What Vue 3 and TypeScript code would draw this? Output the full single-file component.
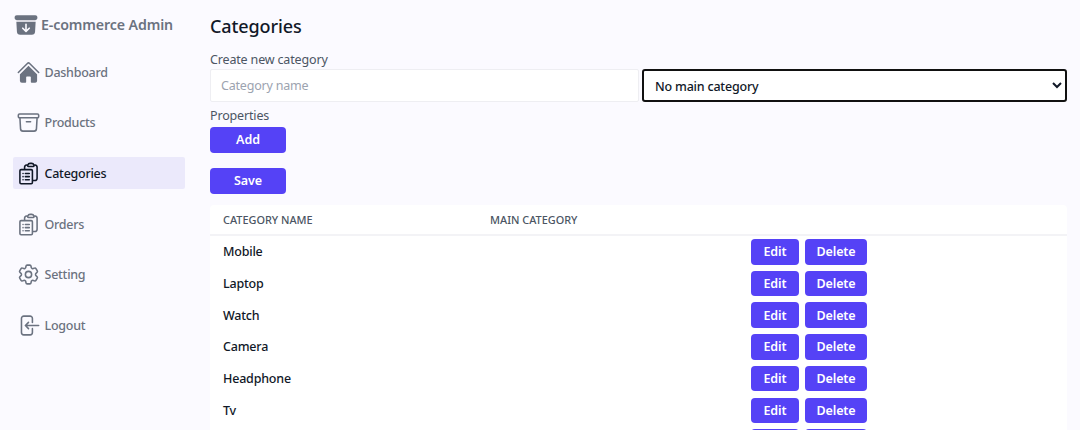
<script setup lang="ts">
type NavItem = { label: string; paths: string[]; solid?: boolean; active?: boolean }

const clipboard =
  'M9 12h3.75M9 15h3.75M9 18h3.75m3 .75H18a2.25 2.25 0 002.25-2.25V6.108c0-1.135-.845-2.098-1.976-2.192a48.424 48.424 0 00-1.123-.08m-5.801 0c-.065.21-.1.433-.1.664 0 .414.336.75.75.75h4.5a.75.75 0 00.75-.75 2.25 2.25 0 00-.1-.664m-5.8 0A2.251 2.251 0 0113.5 2.25H15c1.012 0 1.867.668 2.15 1.586m-5.8 0c-.376.023-.75.05-1.124.08C9.095 4.01 8.25 4.973 8.25 6.108V8.25m0 0H4.875c-.621 0-1.125.504-1.125 1.125v11.25c0 .621.504 1.125 1.125 1.125h9.75c.621 0 1.125-.504 1.125-1.125V9.375c0-.621-.504-1.125-1.125-1.125H8.25zM6.75 12h.008v.008H6.75V12zm0 3h.008v.008H6.75V15zm0 3h.008v.008H6.75V18z'

const nav: NavItem[] = [
  {
    label: 'Dashboard',
    solid: true,
    paths: [
      'M11.47 3.84a.75.75 0 011.06 0l8.69 8.69a.75.75 0 101.06-1.06l-8.689-8.69a2.25 2.25 0 00-3.182 0l-8.69 8.69a.75.75 0 001.061 1.06l8.69-8.69z',
      'M12 5.432l8.159 8.159c.03.03.06.058.091.086v6.198c0 1.035-.84 1.875-1.875 1.875H15a.75.75 0 01-.75-.75v-4.5a.75.75 0 00-.75-.75h-3a.75.75 0 00-.75.75V21a.75.75 0 01-.75.75H5.625a1.875 1.875 0 01-1.875-1.875v-6.198a2.29 2.29 0 00.091-.086L12 5.43z'
    ]
  },
  {
    label: 'Products',
    paths: [
      'M20.25 7.5l-.625 10.632a2.25 2.25 0 01-2.247 2.118H6.622a2.25 2.25 0 01-2.247-2.118L3.75 7.5M10 11.25h4M3.375 7.5h17.25c.621 0 1.125-.504 1.125-1.125v-1.5c0-.621-.504-1.125-1.125-1.125H3.375c-.621 0-1.125.504-1.125 1.125v1.5c0 .621.504 1.125 1.125 1.125z'
    ]
  },
  { label: 'Categories', active: true, paths: [clipboard] },
  { label: 'Orders', paths: [clipboard] },
  {
    label: 'Setting',
    paths: [
      'M9.594 3.94c.09-.542.56-.94 1.11-.94h2.593c.55 0 1.02.398 1.11.94l.213 1.281c.063.374.313.686.645.87.074.04.147.083.22.127.324.196.72.257 1.075.124l1.217-.456a1.125 1.125 0 011.37.49l1.296 2.247a1.125 1.125 0 01-.26 1.431l-1.003.827c-.293.24-.438.613-.431.992a6.759 6.759 0 010 .255c-.007.378.138.75.43.99l1.005.828c.424.35.534.954.26 1.43l-1.298 2.247a1.125 1.125 0 01-1.369.491l-1.217-.456c-.355-.133-.75-.072-1.076.124a6.57 6.57 0 01-.22.128c-.331.183-.581.495-.644.869l-.213 1.28c-.09.543-.56.941-1.11.941h-2.594c-.55 0-1.02-.398-1.11-.94l-.213-1.281c-.062-.374-.312-.686-.644-.87a6.52 6.52 0 01-.22-.127c-.325-.196-.72-.257-1.076-.124l-1.217.456a1.125 1.125 0 01-1.369-.49l-1.297-2.247a1.125 1.125 0 01.26-1.431l1.004-.827c.292-.24.437-.613.43-.992a6.932 6.932 0 010-.255c.007-.378-.138-.75-.43-.99l-1.004-.828a1.125 1.125 0 01-.26-1.43l1.297-2.247a1.125 1.125 0 011.37-.491l1.216.456c.356.133.751.072 1.076-.124.072-.044.146-.087.22-.128.332-.183.582-.495.644-.869l.214-1.281z',
      'M15 12a3 3 0 11-6 0 3 3 0 016 0z'
    ]
  },
  {
    label: 'Logout',
    paths: [
      'M15.75 9V5.25A2.25 2.25 0 0013.5 3h-6a2.25 2.25 0 00-2.25 2.25v13.5A2.25 2.25 0 007.5 21h6a2.25 2.25 0 002.25-2.25V15M12 9l-3 3m0 0l3 3m-3-3h12.75'
    ]
  }
]

const categories: string[] = ['Mobile', 'Laptop', 'Watch', 'Camera', 'Headphone', 'Tv', '']
</script>

<template>
  <div class="page">
    <aside class="sidebar">
      <div class="brand">
        <svg class="brand-icon" viewBox="0 0 24 24" fill="currentColor">
          <path d="M3.375 3C2.339 3 1.5 3.84 1.5 4.875v.75c0 1.036.84 1.875 1.875 1.875h17.25c1.035 0 1.875-.84 1.875-1.875v-.75C22.5 3.839 21.66 3 20.625 3H3.375z" />
          <path fill-rule="evenodd" clip-rule="evenodd" d="M3.087 9l.54 9.176A3 3 0 006.62 21h10.757a3 3 0 002.995-2.824L20.913 9H3.087zM12 10.5a.75.75 0 01.75.75v4.94l1.72-1.72a.75.75 0 111.06 1.06l-3 3a.75.75 0 01-1.06 0l-3-3a.75.75 0 111.06-1.06l1.72 1.72v-4.94a.75.75 0 01.75-.75z" />
        </svg>
        <span>E-commerce Admin</span>
      </div>
      <nav class="nav">
        <a v-for="item in nav" :key="item.label" class="nav-item" :class="{ active: item.active }">
          <svg
            class="nav-icon"
            viewBox="0 0 24 24"
            :fill="item.solid ? 'currentColor' : 'none'"
            :stroke="item.solid ? 'none' : 'currentColor'"
            stroke-width="1.5"
            stroke-linecap="round"
            stroke-linejoin="round"
          >
            <path v-for="d in item.paths" :key="d" :d="d" />
          </svg>
          <span>{{ item.label }}</span>
        </a>
      </nav>
    </aside>

    <main class="main">
      <h1 class="title">Categories</h1>
      <label class="label">Create new category</label>
      <div class="fields">
        <input class="input" type="text" placeholder="Category name" />
        <select class="select">
          <option>No main category</option>
        </select>
      </div>
      <label class="label props">Properties</label>
      <button class="btn wide" type="button">Add</button>
      <button class="btn wide save" type="button">Save</button>

      <table class="table">
        <colgroup>
          <col class="c1" />
          <col class="c2" />
          <col />
        </colgroup>
        <thead>
          <tr>
            <th>Category name</th>
            <th>Main category</th>
            <th></th>
          </tr>
        </thead>
        <tbody>
          <tr v-for="(c, i) in categories" :key="i">
            <td class="name">{{ c }}</td>
            <td></td>
            <td class="actions">
              <button class="btn edit" type="button">Edit</button>
              <button class="btn del" type="button">Delete</button>
            </td>
          </tr>
        </tbody>
      </table>
    </main>
  </div>
</template>

<style>
html,
body {
  margin: 0;
  background: #fbfaff;
  overflow: hidden;
}
</style>

<style scoped>
.page {
  display: flex;
  height: 430px;
  overflow: hidden;
  background: #fbfaff;
  font-family: "Noto Sans", "Open Sans", sans-serif;
  color: #111827;
}
.sidebar {
  width: 172px;
  margin-left: 13px;
  flex: none;
}
.brand {
  display: flex;
  align-items: center;
  gap: 2px;
  height: 26px;
  margin-top: 11px;
  color: #6b7280;
  font-size: 14.2px;
  letter-spacing: -0.12px;
  font-weight: 600;
}
.brand-icon {
  width: 26px;
  height: 26px;
  flex: none;
  margin-top: 1px;
}
.nav {
  display: flex;
  flex-direction: column;
  gap: 18.7px;
  margin-top: 19px;
}
.nav-item {
  display: flex;
  align-items: center;
  gap: 3.5px;
  height: 32px;
  padding-left: 3px;
  border-radius: 2px;
  color: #6b7280;
  font-size: 12.5px;
  letter-spacing: -0.25px;
  font-weight: 500;
}
.nav-item.active {
  background: #ebe9fb;
  color: #111827;
}
.nav-icon {
  width: 25px;
  height: 25px;
  flex: none;
}
.main {
  flex: 1;
  min-width: 0;
  margin-left: 25px;
  margin-right: 13px;
}
.title {
  margin: 12px 0 0;
  font-size: 18px;
  letter-spacing: -0.1px;
  line-height: 28px;
  font-weight: 500;
  color: #111827;
}
.label {
  display: block;
  margin-top: 10px;
  font-size: 12.5px;
  letter-spacing: -0.16px;
  line-height: 19px;
  color: #4b5563;
}
.fields {
  display: flex;
  gap: 3px;
  width: 100%;
}
.input,
.select {
  flex: 1;
  min-width: 0;
  box-sizing: border-box;
  height: 33px;
  border-radius: 2px;
  font-family: inherit;
  font-size: 12.5px;
  letter-spacing: -0.2px;
}
.input {
  padding: 0 10px;
  border: 1px solid #eeeef2;
  background: #fff;
  color: #111827;
}
.input::placeholder {
  color: #9ca3af;
  opacity: 1;
}
.select {
  padding: 1px 7px 0;
  border: 2px solid #111;
  border-radius: 3px;
  background: #fff;
  color: #111827;
  font-weight: 500;
  outline: none;
}
.props {
  margin-top: 4px;
}
.btn {
  display: block;
  box-sizing: border-box;
  height: 25.5px;
  padding: 0;
  border: none;
  border-radius: 4px;
  background: #5542f6;
  color: #fff;
  font-family: inherit;
  font-size: 12.5px;
  letter-spacing: -0.1px;
  font-weight: 600;
}
.wide {
  width: 76px;
  margin-top: 2px;
}
.wide.save {
  margin-top: 15.5px;
}
.table {
  width: 100%;
  margin-top: 11.5px;
  border-collapse: collapse;
  table-layout: fixed;
  background: #fff;
  border-radius: 4px 4px 0 0;
}
.c1 {
  width: 267px;
}
.c2 {
  width: 261px;
}
th {
  height: 30px;
  padding: 0 13px;
  border-bottom: 2px solid #f3f3f6;
  box-sizing: border-box;
  text-align: left;
  font-size: 10.9px;
  font-weight: 500;
  text-transform: uppercase;
  color: #4b5563;
}
td {
  height: 31.7px;
  padding: 0 13px;
  box-sizing: border-box;
}
.name {
  font-size: 12.5px;
  letter-spacing: -0.2px;
  font-weight: 500;
  color: #111827;
}
.actions {
  display: flex;
  align-items: center;
  gap: 6px;
}
.edit {
  width: 48px;
}
.del {
  width: 62px;
}
</style>
